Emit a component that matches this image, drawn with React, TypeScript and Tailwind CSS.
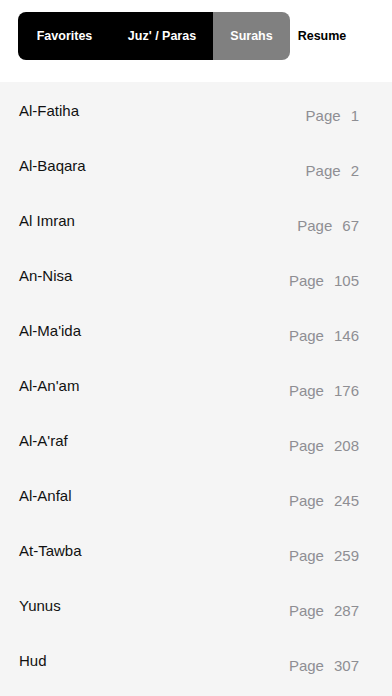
const surahs = [
  { name: 'Al-Fatiha', page: 1 },
  { name: 'Al-Baqara', page: 2 },
  { name: 'Al Imran', page: 67 },
  { name: 'An-Nisa', page: 105 },
  { name: "Al-Ma'ida", page: 146 },
  { name: "Al-An'am", page: 176 },
  { name: "Al-A'raf", page: 208 },
  { name: 'Al-Anfal', page: 245 },
  { name: 'At-Tawba', page: 259 },
  { name: 'Yunus', page: 287 },
  { name: 'Hud', page: 307 },
];

export default function App() {
  return (
    <div className="w-[392px] h-[696px] overflow-hidden bg-[#f5f5f5]" style={{ fontFamily: '"Liberation Sans", Arial, sans-serif' }}>
      <div className="bg-white h-[82px] pt-[12px] pl-[18px]">
        <div className="flex items-center h-[48px] text-[12.5px] font-bold">
          <div className="flex h-full rounded-[8px] overflow-hidden">
            <div className="w-[93px] bg-black text-white flex items-center justify-center">Favorites</div>
            <div className="w-[102px] bg-black text-white flex items-center justify-center">Juz' / Paras</div>
            <div className="w-[77px] bg-[#808080] text-white flex items-center justify-center">Surahs</div>
          </div>
          <div className="w-[64px] text-black flex items-center justify-center">Resume</div>
        </div>
      </div>
      <div>
        {surahs.map((s) => (
          <div key={s.name} className="h-[55px] flex justify-between pl-[19px] pr-[33px]">
            <div className="pt-[19px] text-[15px] leading-[20px] text-[#111]">{s.name}</div>
            <div className="pt-[24px] text-[15px] leading-[20px] text-[#8e8e93] flex gap-[10px]">
              <span>Page</span>
              <span>{s.page}</span>
            </div>
          </div>
        ))}
      </div>
    </div>
  );
}
